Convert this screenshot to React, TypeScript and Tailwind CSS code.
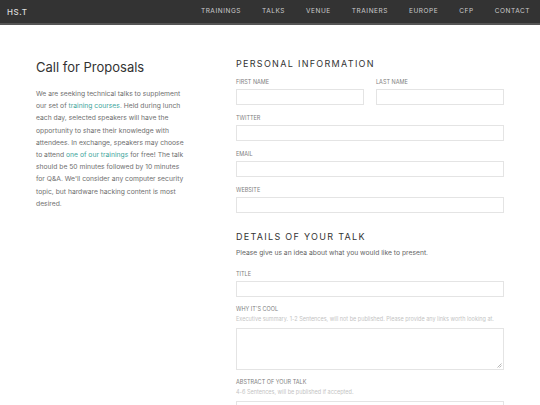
import React from 'react';

const navItems = ['TRAININGS', 'TALKS', 'VENUE', 'TRAINERS', 'EUROPE', 'CFP', 'CONTACT'];

function Label({ children }: { children: React.ReactNode }) {
  return <div className="text-[5.5px] leading-[7px] uppercase text-[#808080] mb-[3px]">{children}</div>;
}

function Hint({ children }: { children: React.ReactNode }) {
  return <div className="text-[5.5px] leading-[7px] text-[#c4c4c4] mb-[5px]">{children}</div>;
}

function Input() {
  return <div className="h-[16px] border border-[#e4e4e4] bg-white" />;
}

function App() {
  return (
    <div className="min-h-screen bg-white" style={{ fontFamily: 'Inter, "Noto Sans", sans-serif' }}>
      {/* Header */}
      <div className="h-[25px] bg-[#333333] border-b-[2px] border-[#555555] flex items-center justify-between pl-[7px] pr-[10px]">
        <div className="text-[8px] font-medium text-[#dddddd] tracking-[0.5px]">HS.T</div>
        <div className="flex gap-[21px]">
          {navItems.map((item) => (
            <span key={item} className="text-[6.5px] text-[#cccccc] tracking-[0.55px]">{item}</span>
          ))}
        </div>
      </div>

      {/* Main */}
      <div className="flex pl-[36px] pr-[36px] pt-[33px]">
        <div className="w-[152px] shrink-0">
          <h1 className="text-[13px] text-[#333333] leading-[18px]">Call for Proposals</h1>
          <p className="mt-[12px] text-[6.75px] leading-[12.2px] text-[#707070]">
            We are seeking technical talks to supplement our set of{' '}
            <span className="text-[#3fa69d]">training courses</span>. Held during lunch each day, selected speakers will have
            the opportunity to share their knowledge with attendees. In exchange, speakers may choose to attend{' '}
            <span className="text-[#3fa69d]">one of our trainings</span> for free! The talk should be 50 minutes followed by
            10 minutes for Q&amp;A. We'll consider any computer security topic, but hardware hacking content is most desired.
          </p>
        </div>

        <div className="ml-[48px] w-[268px]">
          <h2 className="text-[9px] tracking-[1.3px] text-[#333333] leading-[12px]">PERSONAL INFORMATION</h2>
          <div className="mt-[9px] grid grid-cols-2 gap-x-[12px]">
            <div>
              <Label>First Name</Label>
              <Input />
            </div>
            <div>
              <Label>Last Name</Label>
              <Input />
            </div>
          </div>
          <div className="mt-[10px]">
            <Label>Twitter</Label>
            <Input />
          </div>
          <div className="mt-[10px]">
            <Label>Email</Label>
            <Input />
          </div>
          <div className="mt-[10px]">
            <Label>Website</Label>
            <Input />
          </div>

          <h2 className="mt-[18px] text-[9px] tracking-[1.3px] text-[#333333] leading-[12px]">DETAILS OF YOUR TALK</h2>
          <p className="mt-[5px] text-[6.75px] text-[#666666] leading-[10px]">Please give us an idea about what you would like to present.</p>
          <div className="mt-[13px]">
            <Label>Title</Label>
            <Input />
          </div>
          <div className="mt-[9px]">
            <Label>Why it's cool</Label>
            <Hint>Executive summary. 1-2 Sentences, will not be published. Please provide any links worth looking at.</Hint>
            <div className="relative h-[42px] border border-[#e4e4e4]">
              <svg className="absolute right-[1px] bottom-[1px]" width="5" height="5" viewBox="0 0 5 5">
                <path d="M4.5 0.5 L0.5 4.5 M4.5 2.5 L2.5 4.5" stroke="#999" strokeWidth="0.7" />
              </svg>
            </div>
          </div>
          <div className="mt-[9px]">
            <Label>Abstract of your talk</Label>
            <Hint>4-6 Sentences, will be published if accepted.</Hint>
            <div className="h-[42px] border border-[#e4e4e4]" />
          </div>
        </div>
      </div>
    </div>
  );
}

export default App;
